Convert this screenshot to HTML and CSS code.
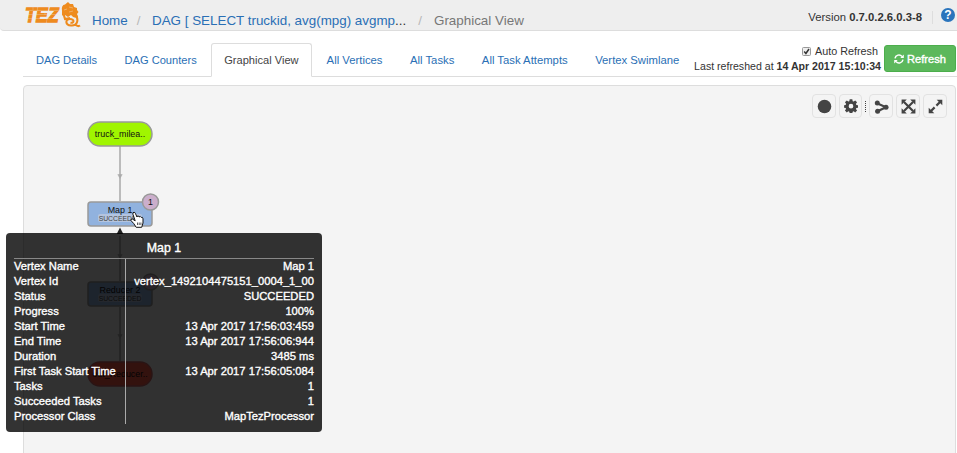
FILE: index.html
```html
<!DOCTYPE html>
<html lang="en">
<head>
<meta charset="utf-8">
<title>Graphical View</title>
<link rel="stylesheet" href="styles.css">
</head>
<body>
<header class="header">
  <svg class="logo" width="56" height="30" viewBox="0 0 56 30" role="img" aria-label="TEZ">
    <text class="logo-text" x="0" y="21.500" textLength="33.500" lengthAdjust="spacingAndGlyphs">TEZ</text>
    <path class="logo-line" d="M0 10.500h35M0 14.500h35M0 18.500h35M8 6v4M20 11v4"/>
    <path class="logo-mark" d="M37 11Q36 5 40 4.500L43 2L45 4L48 4L49 7L52 8V10L53.500 12L52 14L53 17Q49 19 46 15L43 17L40 15L37 15.500Z"/>
    <path class="logo-tail" d="M38.500 14L40 19L45 18M51 15C54 21 52 26 46 25.500C40 25 40 19 45 19C50 19 49 24 45.500 22.500M50 24.500Q53 27 55 25.500"/>
    <path class="logo-cut" d="M39 10l3-1M44 7l4 1M44 12l4-1"/>
  </svg>
  <nav class="breadcrumb">
    <a>Home</a><span class="slash">/</span><a class="crumb-dag">DAG [ SELECT truckid, avg(mpg) avgmp<span class="dots">...</span></a><span class="slash slash-last">/</span><span class="current">Graphical View</span>
  </nav>
  <div class="version">Version <b>0.7.0.2.6.0.3-8</b></div>
  <span class="help">?</span>
</header>

<div class="tabbar">
  <nav class="tabs">
    <a class="tab">DAG Details</a>
    <a class="tab">DAG Counters</a>
    <a class="tab active">Graphical View</a>
    <a class="tab">All Vertices</a>
    <a class="tab">All Tasks</a>
    <a class="tab">All Task Attempts</a>
    <a class="tab">Vertex Swimlane</a>
  </nav>
  <div class="refresh-info">
    <div class="auto"><svg class="check" width="9" height="9" viewBox="0 0 9 9"><rect x=".5" y=".5" width="8" height="8" rx="1"/><path d="M2.200 4.600L3.900 6.500L7 2"/></svg>Auto Refresh</div>
    <div class="last">Last refreshed at <b>14 Apr 2017 15:10:34</b></div>
  </div>
  <button class="refresh"><svg width="10" height="10" viewBox="0 0 10 10"><path class="spin" d="M1 4.300A4 4 0 0 1 8 2.400M9 5.700A4 4 0 0 1 2 7.600"/><path class="spin-tip" d="M9.800.500V4H6.300ZM.200 9.500V6H3.700Z"/></svg>Refresh</button>
</div>

<main class="canvas">
  <svg class="graph" width="931" height="380" viewBox="24 86 931 380">
    <g class="links">
      <path d="M120 146V201M120 236V281M120 307V361"/>
      <path class="arrow" d="M117.800 174.500h4.400L120 178.500ZM117.800 254.500h4.400L120 258.500ZM117.800 334.500h4.400L120 338.500Z"/>
    </g>
    <path class="head" d="M120 227.500L123.300 234H116.700Z"/>
    <g class="node source"><rect x="88" y="122" width="64" height="24" rx="12"/><text x="120" y="137">truck_milea..</text></g>
    <g class="node vertex"><rect x="88" y="202" width="64" height="24" rx="3"/><rect class="status-bg" x="98" y="214" width="44" height="8" rx="2"/><text x="120" y="213">Map 1</text><text class="status" x="120" y="221">SUCCEEDED</text></g>
    <g class="node badge"><circle cx="150.500" cy="202" r="8"/><text x="150.500" y="205">1</text></g>
    <g class="node vertex"><rect x="88" y="282" width="64" height="24" rx="3"/><rect class="status-bg" x="98" y="294" width="44" height="8" rx="2"/><text x="120" y="293">Reducer 2</text><text class="status" x="120" y="301">SUCCEEDED</text></g>
    <g class="node badge"><circle cx="150.500" cy="282" r="8"/></g>
    <g class="node sink"><rect x="88" y="362" width="64" height="24" rx="12"/><text x="120" y="377">out_Reducer..</text></g>
    <path class="cursor" d="M135.200 220.800L132.900 214.200Q132.500 212.300 134 212.300Q135 212.300 135.400 213.400L137 217Q137.200 215.400 138.600 216L139.200 217Q140.300 215.700 141.200 217.400Q142.800 216.700 143 218.800V223L141.700 227.300H136.200L133.700 223.500L131 220.600Q130.400 219 132.300 219Z"/>
    <path class="cursor-line" d="M137.500 222.500v2.500M139.200 222.500v2.500M140.900 222.500v2.500"/>
  </svg>

  <div class="toolbar">
    <span class="tool"><svg width="15" height="15" viewBox="0 0 15 15"><circle cx="7.500" cy="7.500" r="6.800"/></svg></span>
    <span class="tool gear"><svg width="14" height="14" viewBox="0 0 15 15"><path fill-rule="evenodd" d="M6.100.300h2.800l.4 2 1.100.5 1.600-1.200 2 2-1.200 1.600.4 1.100 1.800.300v2.800l-1.800.3-.4 1.100 1.200 1.600-2 2-1.600-1.200-1.100.5-.4 1.700H6.100l-.4-1.700-1.100-.5L3 14.400l-2-2 1.200-1.600-.4-1.100L.100 9.400V6.600l1.700-.3.4-1.100L1 3.600l2-2 1.600 1.200 1.100-.5ZM7.500 5.200a2.500 2.500 0 1 0 0 5 2.500 2.500 0 1 0 0-5Z"/></svg></span>
    <span class="divider"></span>
    <span class="tool share"><svg width="15" height="15" viewBox="0 0 15 15"><path class="stroke" d="M3 4.200L12 8.200L3.500 12.300"/><circle cx="3.300" cy="4" r="2.500"/><circle cx="3.600" cy="12.200" r="2.500"/><circle cx="12" cy="8.200" r="2.500"/></svg></span>
    <span class="tool fit"><svg width="15" height="15" viewBox="0 0 15 15"><path class="stroke" d="M3 3L12 12M12 3L3 12"/><path d="M.600.600H5.800L.600 5.800ZM14.400.600V5.800L9.200.600ZM14.400 14.400H9.200L14.400 9.200ZM.600 14.400V9.200L5.800 14.400Z"/></svg></span>
    <span class="tool full"><svg width="15" height="15" viewBox="0 0 15 15"><path class="stroke" d="M3 12L6.600 8.400M8.400 6.600L12 3"/><path d="M8.700.700H14.300V6.300ZM.700 8.700V14.300H6.300Z"/></svg></span>
  </div>

  <div class="tooltip">
    <div class="tip-title">Map 1</div>
    <div class="tip-body">
      <div class="tip-names"><div>Vertex Name</div><div>Vertex Id</div><div>Status</div><div>Progress</div><div>Start Time</div><div>End Time</div><div>Duration</div><div>First Task Start Time</div><div>Tasks</div><div>Succeeded Tasks</div><div>Processor Class</div></div>
      <div class="tip-values"><div>Map 1</div><div>vertex_1492104475151_0004_1_00</div><div>SUCCEEDED</div><div>100%</div><div>13 Apr 2017 17:56:03:459</div><div>13 Apr 2017 17:56:06:944</div><div>3485 ms</div><div>13 Apr 2017 17:56:05:084</div><div>1</div><div>1</div><div>MapTezProcessor</div></div>
    </div>
  </div>
</main>
</body>
</html>
```
FILE: styles.css
```css
* { box-sizing: border-box; }
html, body { height: 453px; overflow: hidden; }
body {
  margin: 0;
  display: flex;
  flex-direction: column;
  background: #fff;
  color: #333;
  font-family: "Liberation Sans", Arial, sans-serif;
  font-size: 11.1px;
}

.header {
  flex: none;
  display: flex;
  height: 31px;
  padding-left: 25px;
  background: #eee;
  border-bottom: 1px solid #ddd;
  border-bottom-left-radius: 4px;
  white-space: nowrap;
}
.logo { flex: none; }
.logo-text { font-size: 21px; font-weight: bold; font-style: italic; fill: #ee8b1e; stroke: #ee8b1e; stroke-width: 1.3px; }
.logo-line { stroke: #eee; stroke-width: .5; fill: none; opacity: .55; }
.logo-mark { fill: #ee8b1e; }
.logo-tail { fill: none; stroke: #ee8b1e; stroke-width: 2.1; }
.logo-cut { stroke: #eee; stroke-width: .6; opacity: .6; }
.breadcrumb { padding-left: 11px; font-size: 13.4px; line-height: 41px; color: #777; }
.breadcrumb a { color: #2a6fb5; }
.breadcrumb .dots { color: #333; }
.slash { display: inline-block; margin: 0 12px 0 9px; color: #b8b8b8; }
.crumb-dag { margin-left: -.5px; }
.slash-last { margin-left: 12px; }
.version { margin-left: auto; padding-right: 11px; font-size: 11.3px; line-height: 34px; }
.version::after { content: ""; display: inline-block; width: 1px; height: 13px; margin: 0 -11px -3px 10px; background: #ddd; }
.help {
  flex: none;
  width: 14px;
  height: 14px;
  margin: 8px 2px 0 8px;
  border-radius: 50%;
  background: #2a74bc;
  color: #fff;
  font-size: 12px;
  font-weight: bold;
  line-height: 14px;
  text-align: center;
}

.tabbar {
  flex: none;
  display: flex;
  height: 46px;
  margin-left: 23px;
  padding-right: 1px;
  border-bottom: 1px solid #ddd;
  white-space: nowrap;
}
.tabs { display: flex; padding-top: 12px; }
.tab {
  height: 34px;
  padding: 0 12px;
  border: 1px solid transparent;
  margin-right: 1.5px;
  line-height: 33px;
  color: #2a6fb5;
}
.tab.active { background: #fff; border-color: #ddd; border-bottom-color: #fff; border-radius: 3px 3px 0 0; color: #444; margin-right: 2px; }
.tab.active ~ .tab { font-size: 11.3px; }
.refresh-info { margin-left: auto; padding-top: 13px; text-align: right; line-height: 15px; }
.auto { padding-right: 3px; font-size: 10.8px; }
.last { font-size: 10.6px; }
.check { margin-right: 4px; vertical-align: -1px; }
.check rect { fill: #eee; stroke: #999; }
.check path { fill: none; stroke: #333; stroke-width: 1.5; }
.refresh {
  display: flex;
  align-items: center;
  justify-content: center;
  gap: 3px;
  width: 72px;
  height: 27px;
  margin: 14px 0 0 3px;
  padding: 0;
  border: 1px solid #4cae4c;
  border-radius: 3px;
  background: #5cb85c;
  color: #fff;
  font: 11.1px "Liberation Sans", Arial, sans-serif;
  -webkit-text-stroke: .4px #fff;
}
.spin { fill: none; stroke: #fff; stroke-width: 1.5; }
.spin-tip { fill: #fff; }

.canvas {
  position: relative;
  flex: none;
  width: 933px;
  height: 382px;
  margin: 8px 0 0 23px;
  border: 1px solid #ddd;
  border-radius: 4px;
  background: #f4f4f4;
}
.graph { display: block; }
.links path { stroke: #bbb; stroke-width: 2; fill: none; }
.links .arrow { fill: #aaa; stroke: #aaa; stroke-width: .5; }
.head { fill: #222; }
.node rect, .node circle { stroke: #999; stroke-width: 1.5; }
.node text { font-size: 8.9px; fill: #111; text-anchor: middle; }
.source rect { fill: #a0f500; }
.vertex rect { fill: #91b2de; }
.node .status-bg { fill: #b4c4de; stroke: none; }
.node .status { font-size: 6.8px; fill: #444; }
.badge circle { fill: #cbaecb; }
.sink rect { fill: #ff5a48; stroke: #c66; }
.cursor { fill: #fff; stroke: #111; stroke-width: 1; stroke-linejoin: round; }
.cursor-line { stroke: #111; stroke-width: .7; }

.toolbar { position: absolute; top: 8px; right: 8px; display: flex; }
.tool {
  display: flex;
  align-items: center;
  justify-content: center;
  width: 24px;
  height: 24px;
  margin-left: 3px;
  border: 1px solid #e2e2e2;
  border-radius: 4px;
  fill: #444;
}
.gear { width: 23px; }
.tool .stroke { fill: none; stroke: #444; stroke-width: 2.2; }
.divider { width: 1px; height: 11px; margin: 7px 0 0 3px; border-left: 1px dotted #444; }

.tooltip {
  position: absolute;
  left: -18px;
  top: 147px;
  width: 316px;
  height: 199px;
  padding: 8px 8px 0;
  border-radius: 4px;
  background: rgba(0, 0, 0, .8);
  color: #fff;
  font-size: 11.2px;
  -webkit-text-stroke: .35px #fff;
}
.tip-title { height: 18px; border-bottom: 1px solid #888; font-size: 12.4px; line-height: 15px; text-align: center; }
.tip-body { display: flex; line-height: 15px; white-space: nowrap; }
.tip-names { width: 112px; height: 165px; border-right: 1px solid #aaa; }
.tip-values { flex: 1; text-align: right; }
```
